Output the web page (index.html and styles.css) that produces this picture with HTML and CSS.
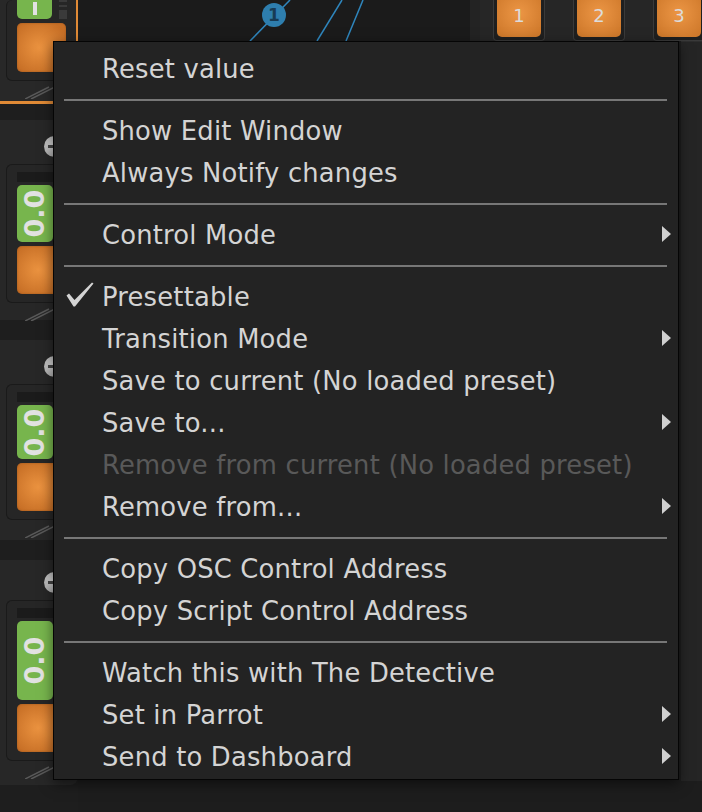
FILE: index.html
```html
<!DOCTYPE html>
<html lang="en">
<head>
    <meta charset="UTF-8">
    <title>Parameter Menu</title>
    <link rel="stylesheet" href="styles.css">
</head>
<body>
    <div class="app">
        <div class="sidebar">
            <div class="panel-top">
                <div class="unit unit-top">
                    <div class="value value-top"><i class="bar"></i></div>
                    <div class="pad pad-top"></div>
                    <div class="slider"><i></i><i></i><b></b></div>
                </div>
                <svg class="hatch" width="30" height="14"><line x1="0" y1="14" x2="24" y2="2"/><line x1="6" y1="14" x2="30" y2="2"/></svg>
            </div>

            <div class="panel">
                <div class="knob"></div>
                <div class="unit">
                    <div class="unit-head"></div>
                    <div class="value" style="height: 57px"><span>0.0</span></div>
                    <div class="pad"></div>
                </div>
                <svg class="hatch" width="30" height="14"><line x1="0" y1="14" x2="24" y2="2"/><line x1="6" y1="14" x2="30" y2="2"/></svg>
            </div>

            <div class="panel">
                <div class="knob"></div>
                <div class="unit">
                    <div class="unit-head"></div>
                    <div class="value" style="height: 54px"><span>0.0</span></div>
                    <div class="pad"></div>
                </div>
                <svg class="hatch" width="30" height="14"><line x1="0" y1="14" x2="24" y2="2"/><line x1="6" y1="14" x2="30" y2="2"/></svg>
            </div>

            <div class="panel panel-tall">
                <div class="knob"></div>
                <div class="unit">
                    <div class="unit-head"></div>
                    <div class="value" style="height: 79px"><span>0.0</span></div>
                    <div class="pad"></div>
                </div>
                <svg class="hatch" width="30" height="14"><line x1="0" y1="14" x2="24" y2="2"/><line x1="6" y1="14" x2="30" y2="2"/></svg>
            </div>
        </div>

        <div class="main">
            <div class="topbar">
                <svg class="graph" width="392" height="41">
                    <line x1="172" y1="41" x2="212" y2="0"/>
                    <line x1="239" y1="41" x2="264" y2="0"/>
                    <line x1="268" y1="41" x2="285" y2="0"/>
                    <circle cx="196" cy="15" r="12"/>
                    <text x="196" y="21" text-anchor="middle">1</text>
                </svg>
                <div class="divider"></div>
                <div class="presets">
                    <div class="slot"><div class="preset">1</div></div>
                    <div class="slot"><div class="preset">2</div></div>
                    <div class="slot"><div class="preset">3</div></div>
                </div>
            </div>
            <div class="workspace">
                <div class="side-strip"></div>
            </div>
        </div>
    </div>

    <div class="menu">
        <div class="item">Reset value</div>
        <div class="sep"></div>
        <div class="item">Show Edit Window</div>
        <div class="item">Always Notify changes</div>
        <div class="sep"></div>
        <div class="item sub">Control Mode</div>
        <div class="sep"></div>
        <div class="item checked">
            <svg class="check" width="28" height="25" viewBox="0 0 28 25"><path d="M0.5 13.5 L3 11.5 L8.5 18 L26 0.5 L27.5 1.5 L9 24.5 L7.5 24.5 Z"/></svg>
            Presettable
        </div>
        <div class="item sub">Transition Mode</div>
        <div class="item">Save to current (No loaded preset)</div>
        <div class="item sub">Save to...</div>
        <div class="item disabled">Remove from current (No loaded preset)</div>
        <div class="item sub">Remove from...</div>
        <div class="sep"></div>
        <div class="item">Copy OSC Control Address</div>
        <div class="item">Copy Script Control Address</div>
        <div class="sep"></div>
        <div class="item">Watch this with The Detective</div>
        <div class="item sub">Set in Parrot</div>
        <div class="item sub">Send to Dashboard</div>
    </div>
</body>
</html>
```

FILE: styles.css
```css
body {
    margin: 0;
    padding: 0;
    width: 702px;
    height: 812px;
    overflow: hidden;
    background-color: #1c1c1c;
    font-family: 'DejaVu Sans', 'Verdana', sans-serif;
}
.app {
    display: flex;
    height: 812px;
}

/* left column of parameter units */
.sidebar {
    width: 78px;
    flex-shrink: 0;
    display: flex;
    flex-direction: column;
    gap: 16px;
    background-color: #1e1e1e;
}
.panel-top {
    height: 101px;
    background-color: #282828;
    border-right: 2px solid #e08a36;
    border-bottom: 3px solid #e08a36;
    box-sizing: content-box;
    width: 76px;
}
.panel {
    height: 184px;
    padding-top: 16px;
    background-color: #272727;
    border-radius: 0 0 8px 0;
}
.panel + .panel {
    margin-top: 4px;
}
.panel-tall {
    height: 213px;
    padding-top: 12px;
}
.knob {
    width: 21px;
    height: 21px;
    margin-left: 44px;
    border-radius: 50%;
    background: radial-gradient(circle at 40% 40%, #d4d4d4, #9a9a9a);
    position: relative;
}
.knob::after {
    content: '';
    position: absolute;
    left: 4px;
    top: 9px;
    width: 9px;
    height: 3px;
    background-color: #454545;
}
.unit {
    margin: 7px 0 0 6px;
    width: 70px;
    padding: 7px 10px 8px 10px;
    box-sizing: border-box;
    border: 1px solid #1a1a1a;
    border-right: none;
    border-radius: 6px 0 0 6px;
    background-color: #262626;
}
.unit-top {
    margin-top: 0;
    padding-top: 0;
    border-top: none;
    height: 81px;
    position: relative;
}
.unit-head {
    height: 10px;
    margin-bottom: 3px;
    background-color: #1b1b1b;
}
.value {
    width: 36px;
    height: 57px;
    border-radius: 5px;
    background-color: #77b54d;
    display: flex;
    align-items: center;
    justify-content: center;
    overflow: hidden;
}
.value span {
    transform: rotate(-90deg);
    color: #e2e2e2;
    font-size: 27px;
    font-weight: bold;
    font-family: 'DejaVu Sans', sans-serif;
}
.value-top {
    width: 35px;
    height: 19px;
    border-radius: 0 0 5px 5px;
}
.bar {
    width: 4px;
    height: 13px;
    margin-bottom: 2px;
    background-color: #e2e2e2;
}
.pad {
    width: 47px;
    height: 48px;
    margin-top: 4px;
    border-radius: 5px;
    background: radial-gradient(circle at 45% 50%, #eb9340, #c76f26 80%);
    box-shadow: inset 0 0 2px #9a531c;
}
.pad-top {
    width: 49px;
    height: 49px;
}
.slider {
    position: absolute;
    left: 52px;
    top: 0;
    width: 8px;
    display: flex;
    flex-direction: column;
    gap: 3px;
}
.slider i {
    height: 2px;
    background-color: #3a3a3a;
}
.slider b {
    height: 9px;
    background-color: #3a3a3a;
}
.hatch {
    display: block;
    margin: 4px 0 0 25px;
}
.hatch line {
    stroke: #5a5a5a;
    stroke-width: 1.5;
}

/* top area and workspace */
.main {
    flex: 1;
    display: flex;
    flex-direction: column;
}
.topbar {
    height: 41px;
    display: flex;
    background-color: #1b1b1b;
}
.graph line {
    stroke: #2f86bd;
    stroke-width: 1.5;
}
.graph circle {
    fill: #2e7eae;
}
.graph text {
    font-family: 'DejaVu Sans', sans-serif;
    font-weight: bold;
    font-size: 17px;
    fill: #173b55;
}
.divider {
    width: 10px;
    background-color: #232323;
}
.presets {
    flex: 1;
    display: flex;
    gap: 28px;
    padding-left: 13px;
    background-color: #262626;
}
.slot {
    width: 52px;
    padding: 0 3px 3px 3px;
    box-sizing: border-box;
    border: 1px solid #3a3a3a;
    border-top: none;
    border-radius: 0 0 4px 4px;
    background-color: #1f1f1f;
}
.preset {
    height: 37px;
    border-radius: 0 0 5px 5px;
    background: radial-gradient(circle at 50% 35%, #ec9645, #d07a2c 85%);
    color: #dcdcdc;
    font-size: 18px;
    text-align: center;
    line-height: 32px;
}
.workspace {
    flex: 1;
    display: flex;
    justify-content: flex-end;
    background-color: #1d1d1d;
}
.side-strip {
    width: 24px;
    height: 739px;
    background-color: #252525;
    border-top: 1px solid #2e2e2e;
}

/* context menu */
.menu {
    position: absolute;
    left: 53px;
    top: 41px;
    width: 626px;
    height: 739px;
    box-sizing: border-box;
    padding-top: 6px;
    background-color: #232323;
    border: 1px solid #050505;
    box-shadow: 0 4px 12px rgba(0, 0, 0, 0.5);
}
.item {
    position: relative;
    height: 42px;
    padding-left: 48px;
    display: flex;
    align-items: center;
    font-size: 25.8px;
    letter-spacing: 0.2px;
    color: #d4d4d4;
    white-space: nowrap;
}
.item.disabled {
    color: #595959;
}
.item.sub::after {
    content: '';
    position: absolute;
    right: 7px;
    top: 12px;
    border-left: 9px solid #d0d0d0;
    border-top: 8px solid transparent;
    border-bottom: 8px solid transparent;
}
.check {
    position: absolute;
    left: 12px;
    top: 6px;
}
.check path {
    fill: #d4d4d4;
}
.sep {
    height: 2px;
    margin: 9px 11px 9px 10px;
    background-color: #777777;
}
```
